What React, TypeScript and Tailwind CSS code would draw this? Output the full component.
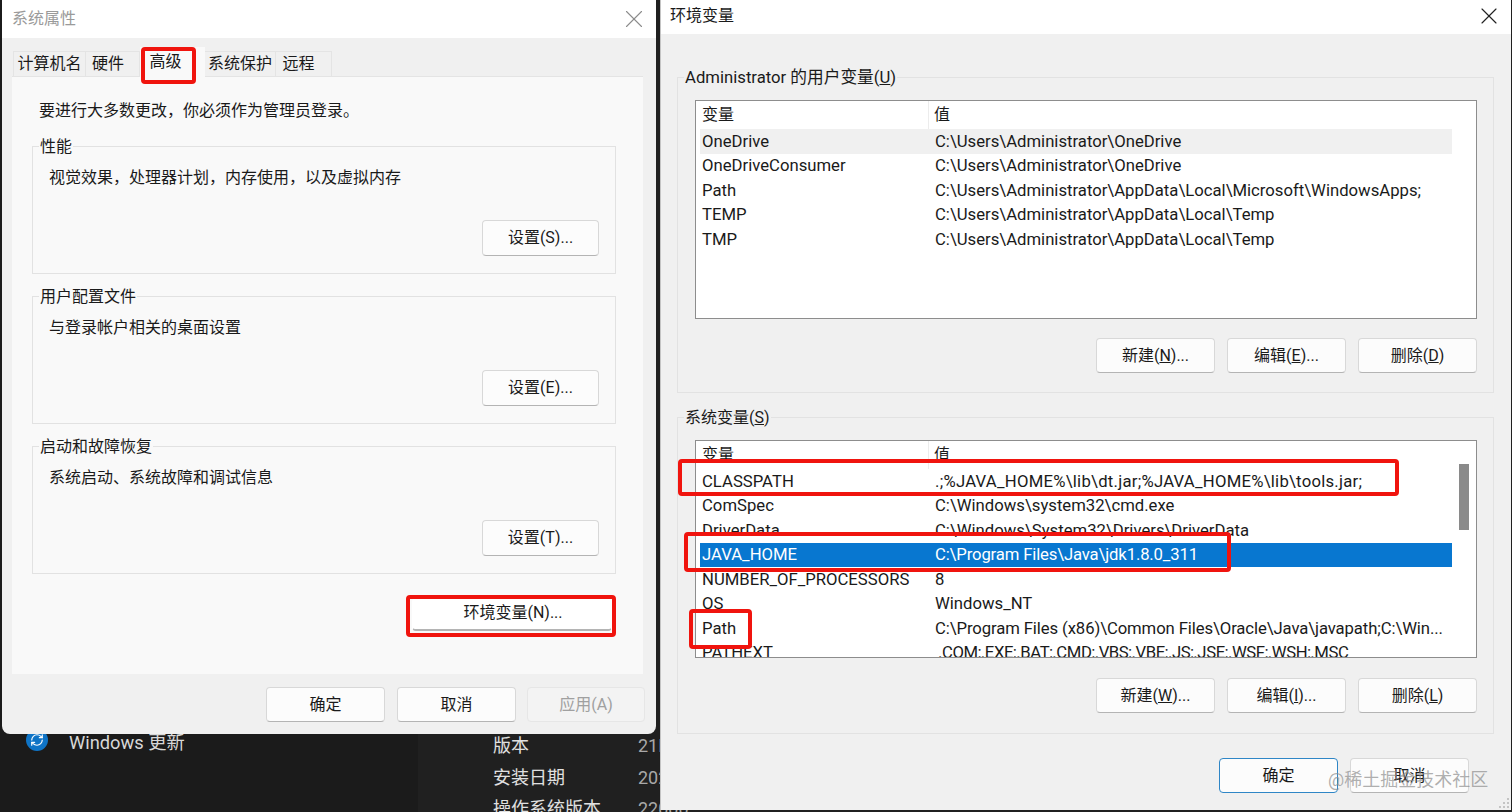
import React from 'react';
import { RefreshCw, X } from 'lucide-react';
import { twMerge } from 'tailwind-merge';

const Btn = ({ children, className = '' }: { children: React.ReactNode; className?: string }) => (
  <div className={twMerge('flex items-center justify-center w-[119px] h-[35px] rounded-[4px] bg-[#fcfcfc] border border-[#d8d8d8] border-b-[#b4b4b4] text-[16px] text-[#1a1a1a]', className)}>
    {children}
  </div>
);

const Group = ({ label, className = '', children }: { label: React.ReactNode; className?: string; children: React.ReactNode }) => (
  <div className={`relative border border-[#e2e2e2] ${className}`}>
    <span className="absolute -top-[10px] left-[6px] px-[1px] bg-inherit text-[16px] leading-[20px] text-[#1a1a1a]">{label}</span>
    {children}
  </div>
);

const SettingGroup = ({ label, text, button }: { label: string; text: string; button: React.ReactNode }) => (
  <Group label={label} className="h-[128px] bg-[#f9f9f9] flex flex-col justify-between pt-[21px] pb-[17px] pl-[16px] pr-[16px]">
    <p className="text-[16px] leading-[20px] text-[#1a1a1a]">{text}</p>
    <div className="flex justify-end">
      <Btn className="w-[117px] h-[36px]">{button}</Btn>
    </div>
  </Group>
);

const Tab = ({ label, className = '' }: { label: string; className?: string }) => (
  <div className={twMerge('h-[25px] flex items-center justify-center border-t border-r border-[#e4e4e4] bg-[#f0f0f0] text-[16px] text-[#1a1a1a]', className)}>{label}</div>
);

type Row = [string, string, string?];

const VarList = ({ rows, selected, scroll, top }: { rows: Row[]; selected?: number; scroll?: boolean; top?: boolean }) => (
  <div className={`flex border border-[#8d8d8d] bg-white overflow-hidden ${top ? 'h-[219px]' : 'h-[218px]'}`}>
    <div className="w-[752px] ml-[4px]">
      <div className="flex h-[28px] items-center text-[16px] text-[#1a1a1a]">
        <div className="w-[229px] h-full pl-[2px] flex items-center border-r border-[#ececec]">变量</div>
        <div className="pl-[5px]">值</div>
      </div>
      {rows.map(([name, value, valueClass], i) => (
        <div
          key={name}
          className={`flex h-[24.5px] shrink-0 items-center whitespace-nowrap text-[16.7px] ${i === selected ? 'bg-[#0877d0] text-white' : 'text-[#1a1a1a]'} ${top && i === 0 ? 'bg-[#f0f0f0]' : ''}`}
        >
          <div className="w-[230px] pl-[2px]">{name}</div>
          <div className={`pl-[5px] ${valueClass ?? ''}`}>{value}</div>
        </div>
      ))}
    </div>
    {scroll && (
      <div className="flex-1 pl-[7px] pt-[23px]">
        <div className="w-[10px] h-[66px] bg-[#8a8a8a]" />
      </div>
    )}
  </div>
);

const userVars: Row[] = [
  ['OneDrive', 'C:\\Users\\Administrator\\OneDrive'],
  ['OneDriveConsumer', 'C:\\Users\\Administrator\\OneDrive'],
  ['Path', 'C:\\Users\\Administrator\\AppData\\Local\\Microsoft\\WindowsApps;'],
  ['TEMP', 'C:\\Users\\Administrator\\AppData\\Local\\Temp'],
  ['TMP', 'C:\\Users\\Administrator\\AppData\\Local\\Temp'],
];

const sysVars: Row[] = [
  ['CLASSPATH', '.;%JAVA_HOME%\\lib\\dt.jar;%JAVA_HOME%\\lib\\tools.jar;', 'tracking-[0.25px]'],
  ['ComSpec', 'C:\\Windows\\system32\\cmd.exe'],
  ['DriverData', 'C:\\Windows\\System32\\Drivers\\DriverData'],
  ['JAVA_HOME', 'C:\\Program Files\\Java\\jdk1.8.0_311', 'tracking-[-0.15px]'],
  ['NUMBER_OF_PROCESSORS', '8'],
  ['OS', 'Windows_NT'],
  ['Path', 'C:\\Program Files (x86)\\Common Files\\Oracle\\Java\\javapath;C:\\Win...', 'tracking-[-0.1px]'],
  ['PATHEXT', '.COM;.EXE;.BAT;.CMD;.VBS;.VBE;.JS;.JSE;.WSF;.WSH;.MSC', 'ml-[3px] tracking-[-0.4px]'],
];

const Mark = ({ className }: { className: string }) => (
  <div className={`absolute border-[4px] border-[#f0140e] rounded-[4px] ${className}`} />
);

export default function App() {
  return (
    <div className="relative w-[1512px] h-[812px] overflow-hidden flex bg-[#1b1b1b] font-['Roboto','Noto_Sans_CJK_SC',sans-serif]">
      {/* desktop behind the dialogs */}
      <div className="w-[418px] pt-[729px] pl-[26px]">
        <div className="flex items-center h-[22px]">
          <div className="w-[22px] h-[22px] rounded-full bg-[#0f74c6] flex items-center justify-center">
            <RefreshCw size={14} color="#fff" strokeWidth={2} />
          </div>
          <span className="ml-[21px] mt-[5px] text-[18.3px] text-[#d8d8d8]">Windows 更新</span>
        </div>
      </div>
      <div className="flex-1 bg-[#202020] pt-[730px] pl-[75px] text-[18px] leading-[31.5px] text-[#e0e0e0]">
        {[['版本', '21H2'], ['安装日期', '2021'], ['操作系统版本', '22000']].map(([k, v]) => (
          <div key={k} className="flex">
            <div className="w-[145px]">{k}</div>
            <div className="text-[#a8a8a8]">{v}</div>
          </div>
        ))}
      </div>

      {/* 系统属性 */}
      <div className="absolute left-[2px] top-0 w-[654px] h-[734px] rounded-b-[8px] overflow-hidden flex flex-col bg-[#f0f0f0]">
        <div className="h-[38px] shrink-0 bg-white flex items-center justify-between pl-[10px] pr-[7px]">
          <span className="text-[16px] text-[#9a9a9a]">系统属性</span>
          <X size={30} color="#8c8c8c" strokeWidth={0.9} />
        </div>
        <div className="flex h-[38px] items-end pl-[11px]">
          <Tab label="计算机名" className="w-[73px] border-l" />
          <Tab label="硬件" className="w-[54px] justify-start pl-[6px]" />
          <div className="w-[65px] h-[30px] -mb-[1px] relative flex items-center justify-center pr-[14px] bg-[#f9f9f9] text-[16px] text-[#1a1a1a]">高级</div>
          <Tab label="系统保护" className="w-[71px]" />
          <Tab label="远程" className="w-[56px] pr-[10px]" />
        </div>
        <div className="h-[598px] mx-[10px] mr-[13px] bg-[#f9f9f9] border-t border-[#e4e4e4] pl-[20px] pr-[27px]">
          <p className="mt-[24px] mb-[25px] pl-[7px] text-[16px] leading-[20px] text-[#1a1a1a]">要进行大多数更改，你必须作为管理员登录。</p>
          <div className="flex flex-col gap-[22px]">
            <SettingGroup label="性能" text="视觉效果，处理器计划，内存使用，以及虚拟内存" button="设置(S)..." />
            <SettingGroup label="用户配置文件" text="与登录帐户相关的桌面设置" button="设置(E)..." />
            <SettingGroup label="启动和故障恢复" text="系统启动、系统故障和调试信息" button="设置(T)..." />
          </div>
          <div className="flex justify-end mt-[24px] mr-[4px]">
            <Btn className="w-[200px] h-[33px] pb-[3px] pl-[2px] border-x-white border-t-white border-b-[2px] border-b-[#b4b4b4] bg-white">环境变量(N)...</Btn>
          </div>
        </div>
        <div className="flex justify-end pt-[13px] pr-[11px]">
          <Btn>确定</Btn>
          <Btn className="ml-[12px]">取消</Btn>
          <Btn className="ml-[11px] w-[118px] bg-[#f3f3f3] border-[#e6e6e6] border-b-[#e6e6e6] text-[#a0a0a0]">应用(A)</Btn>
        </div>
      </div>

      {/* 环境变量 */}
      <div className="absolute left-[660px] top-0 w-[851px] h-[810px] flex flex-col bg-[#f0f0f0] border-l border-[#c4c4c4]">
        <div className="h-[34px] shrink-0 bg-white flex items-center justify-between pb-[3px] pl-[9px] pr-[8px]">
          <span className="text-[16px] text-[#1a1a1a]">环境变量</span>
          <X size={28} color="#222" strokeWidth={1} />
        </div>
        <div className="pt-[43px] pl-[16px] pr-[17px]">
          <Group
            label={<span className="text-[16.7px]">Administrator 的用户变量(<u>U</u>)</span>}
            className="h-[316px] bg-[#f0f0f0] pt-[22px] pl-[17px] pr-[16px]"
          >
            <VarList rows={userVars} top />
            <div className="flex justify-end gap-[12px] mt-[19px]">
              <Btn>新建(<u>N</u>)...</Btn>
              <Btn>编辑(<u>E</u>)...</Btn>
              <Btn>删除(<u>D</u>)</Btn>
            </div>
          </Group>
          <Group label={<>系统变量(<u>S</u>)</>} className="h-[317px] mt-[24px] bg-[#f0f0f0] pt-[22px] pl-[17px] pr-[16px]">
            <VarList rows={sysVars} selected={3} scroll />
            <div className="flex justify-end gap-[12px] mt-[20px]">
              <Btn>新建(<u>W</u>)...</Btn>
              <Btn>编辑(<u>I</u>)...</Btn>
              <Btn>删除(<u>L</u>)</Btn>
            </div>
          </Group>
        </div>
        <div className="flex justify-end gap-[12px] mt-[24px] pr-[42px]">
          <Btn className="border-[#2f86c6] border-b-[#2f86c6]">确定</Btn>
          <Btn>取消</Btn>
        </div>
        {/* resize grip */}
        <svg className="absolute right-[1px] bottom-[1px]" width="11" height="11" viewBox="0 0 11 11" fill="#c4c4c4">
          <rect x="8" y="0" width="2" height="2" />
          <rect x="4" y="4" width="2" height="2" />
          <rect x="8" y="4" width="2" height="2" />
          <rect x="0" y="8" width="2" height="2" />
          <rect x="4" y="8" width="2" height="2" />
          <rect x="8" y="8" width="2" height="2" />
        </svg>
      </div>

      {/* red annotations */}
      <Mark className="left-[141px] top-[47px] w-[55px] h-[37px]" />
      <Mark className="left-[406px] top-[595px] w-[210px] h-[42px]" />
      <Mark className="left-[678px] top-[459px] w-[721px] h-[37px]" />
      <Mark className="left-[684px] top-[532px] w-[547px] h-[40px]" />
      <Mark className="left-[689px] top-[609px] w-[63px] h-[40px]" />

      <span className="absolute left-[1328px] top-[768px] text-[18px] leading-[24px] text-[#8c8c8c]/70">@稀土掘金技术社区</span>
    </div>
  );
}
